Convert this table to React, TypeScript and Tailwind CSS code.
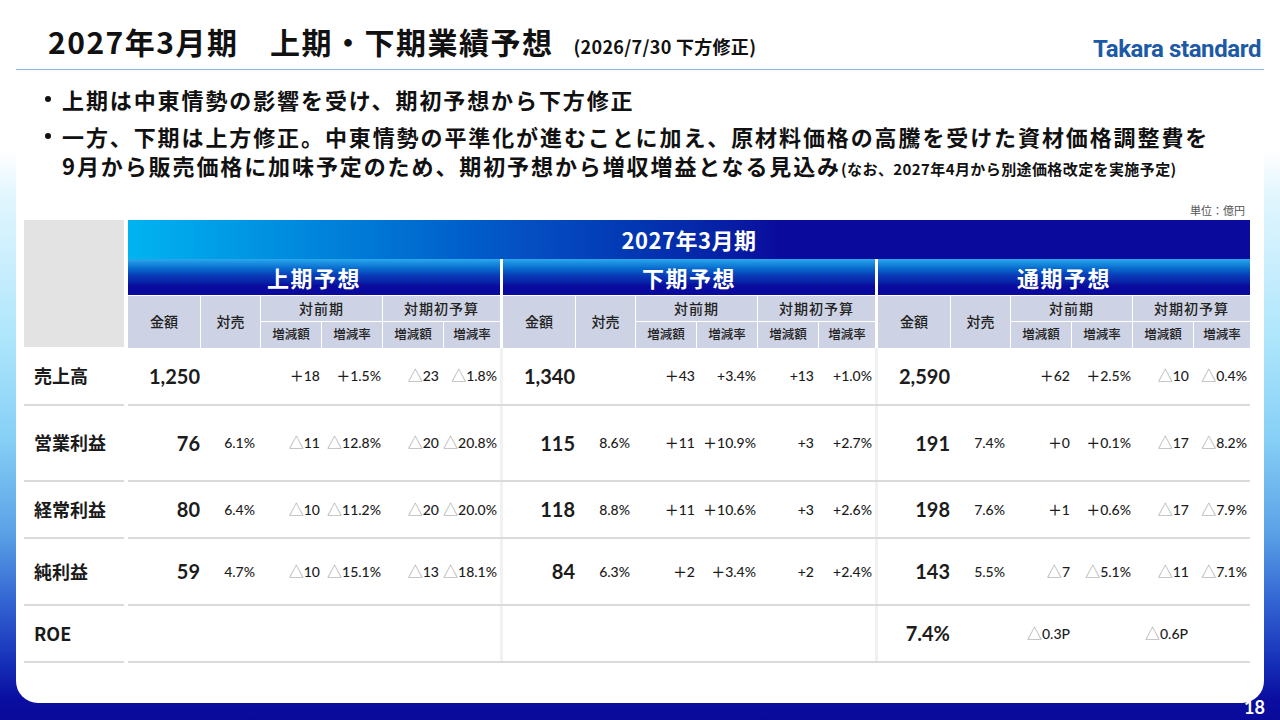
import React from 'react';

const JP = "font-['Noto_Sans_CJK_JP',sans-serif]";
const NUM = "font-['Lato','Noto_Sans_CJK_JP',sans-serif]";
const COLS = 'grid grid-cols-[72px_60px_61px_61px_61px_57px]';
const PAD = ['pr-0', 'pr-[5px]', 'pr-px', 'pr-px', 'pr-[4px]', 'pr-[3px]'];

interface Row {
  label: string;
  h: string;
  secs: string[][];
}

const EMPTY = ['', '', '', '', '', ''];

const rows: Row[] = [
  {
    label: '売上高',
    h: 'h-[58px]',
    secs: [
      ['1,250', '', '＋18', '＋1.5%', '△23', '△1.8%'],
      ['1,340', '', '＋43', '+3.4%', '+13', '+1.0%'],
      ['2,590', '', '＋62', '＋2.5%', '△10', '△0.4%'],
    ],
  },
  {
    label: '営業利益',
    h: 'h-[76px]',
    secs: [
      ['76', '6.1%', '△11', '△12.8%', '△20', '△20.8%'],
      ['115', '8.6%', '＋11', '＋10.9%', '+3', '+2.7%'],
      ['191', '7.4%', '＋0', '＋0.1%', '△17', '△8.2%'],
    ],
  },
  {
    label: '経常利益',
    h: 'h-[57px]',
    secs: [
      ['80', '6.4%', '△10', '△11.2%', '△20', '△20.0%'],
      ['118', '8.8%', '＋11', '＋10.6%', '+3', '+2.6%'],
      ['198', '7.6%', '＋1', '＋0.6%', '△17', '△7.9%'],
    ],
  },
  {
    label: '純利益',
    h: 'h-[67px]',
    secs: [
      ['59', '4.7%', '△10', '△15.1%', '△13', '△18.1%'],
      ['84', '6.3%', '＋2', '＋3.4%', '+2', '+2.4%'],
      ['143', '5.5%', '△7', '△5.1%', '△11', '△7.1%'],
    ],
  },
  {
    label: 'ROE',
    h: 'h-[57px]',
    secs: [EMPTY, EMPTY, ['7.4%', '', '△0.3P', '', '△0.6P', '']],
  },
];

const Val = ({ v }: { v: string }) => {
  if (v.startsWith('△')) {
    return (
      <>
        <span className="font-normal text-[15px] text-[#9a9a9a]">△</span>
        {v.slice(1)}
      </>
    );
  }
  return <>{v}</>;
};

const SectionHead = ({ title }: { title: string }) => (
  <div className="w-[372px] flex flex-col">
    <div className="h-[36px] flex items-center justify-center bg-linear-to-b from-[#2aa8ec] via-[#0b3cb8] via-45% to-[#0a0a9e] to-75%">
      <span className={`${JP} text-white font-bold text-[22px] tracking-[1.5px] leading-none`}>{title}</span>
    </div>
    <div className={`${JP} grid grid-cols-[72px_59px_60px_60px_60px_56px] grid-rows-[25px_26px] gap-px bg-white pt-px text-[#222]`}>
      <div className="row-span-2 bg-[#cdd2e4] flex items-center justify-center text-[14px] font-medium">金額</div>
      <div className="row-span-2 bg-[#cdd2e4] flex items-center justify-center text-[14px] font-medium">対売</div>
      <div className="col-span-2 bg-[#cdd2e4] flex items-center justify-center text-[14px] font-medium tracking-[1px]">対前期</div>
      <div className="col-span-2 bg-[#cdd2e4] flex items-center justify-center text-[14px] font-medium tracking-[1px]">対期初予算</div>
      <div className="bg-[#cdd2e4] flex items-center justify-center text-[12.5px] font-medium">増減額</div>
      <div className="bg-[#cdd2e4] flex items-center justify-center text-[12.5px] font-medium">増減率</div>
      <div className="bg-[#cdd2e4] flex items-center justify-center text-[12.5px] font-medium">増減額</div>
      <div className="bg-[#cdd2e4] flex items-center justify-center text-[12.5px] font-medium">増減率</div>
    </div>
  </div>
);

const SectionBody = ({ vals, roe }: { vals: string[]; roe: boolean }) => (
  <div className={`${COLS} w-[372px] ${NUM} text-[#1c1c1c]`}>
    {vals.map((v, i) => (
      <div
        key={i}
        className={`flex items-center justify-end ${PAD[i]} ${roe && i === 2 ? 'pr-[7px]' : ''} ${roe && i === 4 ? 'pr-[5px]' : ''} ${i === 0 ? 'text-[20px] font-bold' : 'text-[14px] font-medium'}`}
      >
        <Val v={v} />
      </div>
    ))}
  </div>
);

const App = () => {
  return (
    <div className="relative w-[1280px] h-[720px] overflow-hidden bg-[linear-gradient(180deg,#ffffff_0%,#ffffff_21%,#e2f6fe_27%,#aee6fc_47%,#86cff6_61%,#5aa2e6_74%,#3568d4_83%,#1630b8_92%,#0a0ea0_97%,#0a0a9a_100%)]">
      <div className="mx-4 h-[703px] bg-white rounded-b-[22px] flex flex-col">
        {/* title bar */}
        <div className="h-[69.5px] flex items-end justify-between border-b-[1.5px] border-[#8fb5de]">
          <div className={`${JP} flex items-baseline pl-[32px] pb-[13px] text-[#111] font-bold`}>
            <span className="text-[30px] leading-none tracking-[1.5px]">2027年3月期　上期・下期業績予想</span>
            <span className="ml-[20px] text-[18px] leading-none tracking-[0.3px]">(2026/7/30 下方修正)</span>
          </div>
          <div className="pr-[3px] pb-[8px] font-['Roboto',sans-serif] font-bold text-[24px] leading-none tracking-[-0.4px] text-[#1d5aa6]">
            Takara standard
          </div>
        </div>

        {/* bullets */}
        <div className={`${JP} pt-[15px] pl-[26px] flex flex-col gap-[8px] text-[#111] font-bold text-[22px] leading-[29px] tracking-[1.9px]`}>
          <div className="flex">
            <div className="w-[20px] h-[29px] flex items-center shrink-0">
              <span className="ml-[3px] w-[6px] h-[6px] rounded-full bg-[#111]" />
            </div>
            <div>上期は中東情勢の影響を受け、期初予想から下方修正</div>
          </div>
          <div className="flex">
            <div className="w-[20px] h-[29px] flex items-center shrink-0">
              <span className="ml-[3px] w-[6px] h-[6px] rounded-full bg-[#111]" />
            </div>
            <div>
              一方、下期は上方修正。中東情勢の平準化が進むことに加え、原材料価格の高騰を受けた資材価格調整費を
              <br />
              9月から販売価格に加味予定のため、期初予想から増収増益となる見込み
              <span className="text-[15px] tracking-[0.4px]">(なお、2027年4月から別途価格改定を実施予定)</span>
            </div>
          </div>
        </div>

        {/* unit */}
        <div className={`${JP} mt-[20px] pr-[19px] text-right text-[11px] leading-[14px] text-[#555]`}>単位：億円</div>

        {/* table */}
        <div className="mt-[3px] ml-[8px] flex flex-col">
          <div className="flex">
            <div className="w-[100px] h-[127px] bg-[#e3e3e3]" />
            <div className="ml-[4px] w-[1122px] flex flex-col">
              <div className="h-[39px] flex items-center justify-center bg-linear-to-r from-[#00b4f0] via-[#0650c4] via-35% to-[#0a0a9c] to-58%">
                <span className={`${JP} text-white font-bold text-[22px] leading-none tracking-[0.5px]`}>2027年3月期</span>
              </div>
              <div className="flex gap-[3px] bg-white">
                <SectionHead title="上期予想" />
                <SectionHead title="下期予想" />
                <SectionHead title="通期予想" />
              </div>
            </div>
          </div>

          {rows.map((r) => (
            <div key={r.label} className={`flex ${r.h}`}>
              <div className={`${JP} w-[100px] border-b-2 border-[#dadada] flex items-center pl-[10px] text-[18px] font-bold text-[#1a1a1a]`}>
                {r.label}
              </div>
              <div className="ml-[4px] w-[1122px] flex border-b-2 border-[#dadada]">
                <SectionBody vals={r.secs[0]} roe={r.label === 'ROE'} />
                <div className="w-[3px] bg-[#f1f1f1]" />
                <SectionBody vals={r.secs[1]} roe={r.label === 'ROE'} />
                <div className="w-[3px] bg-[#f1f1f1]" />
                <SectionBody vals={r.secs[2]} roe={r.label === 'ROE'} />
              </div>
            </div>
          ))}
        </div>
      </div>
      <div className={`${NUM} absolute right-[15px] bottom-[5px] text-white font-bold text-[18px] leading-[16px]`}>18</div>
    </div>
  );
};

export default App;
